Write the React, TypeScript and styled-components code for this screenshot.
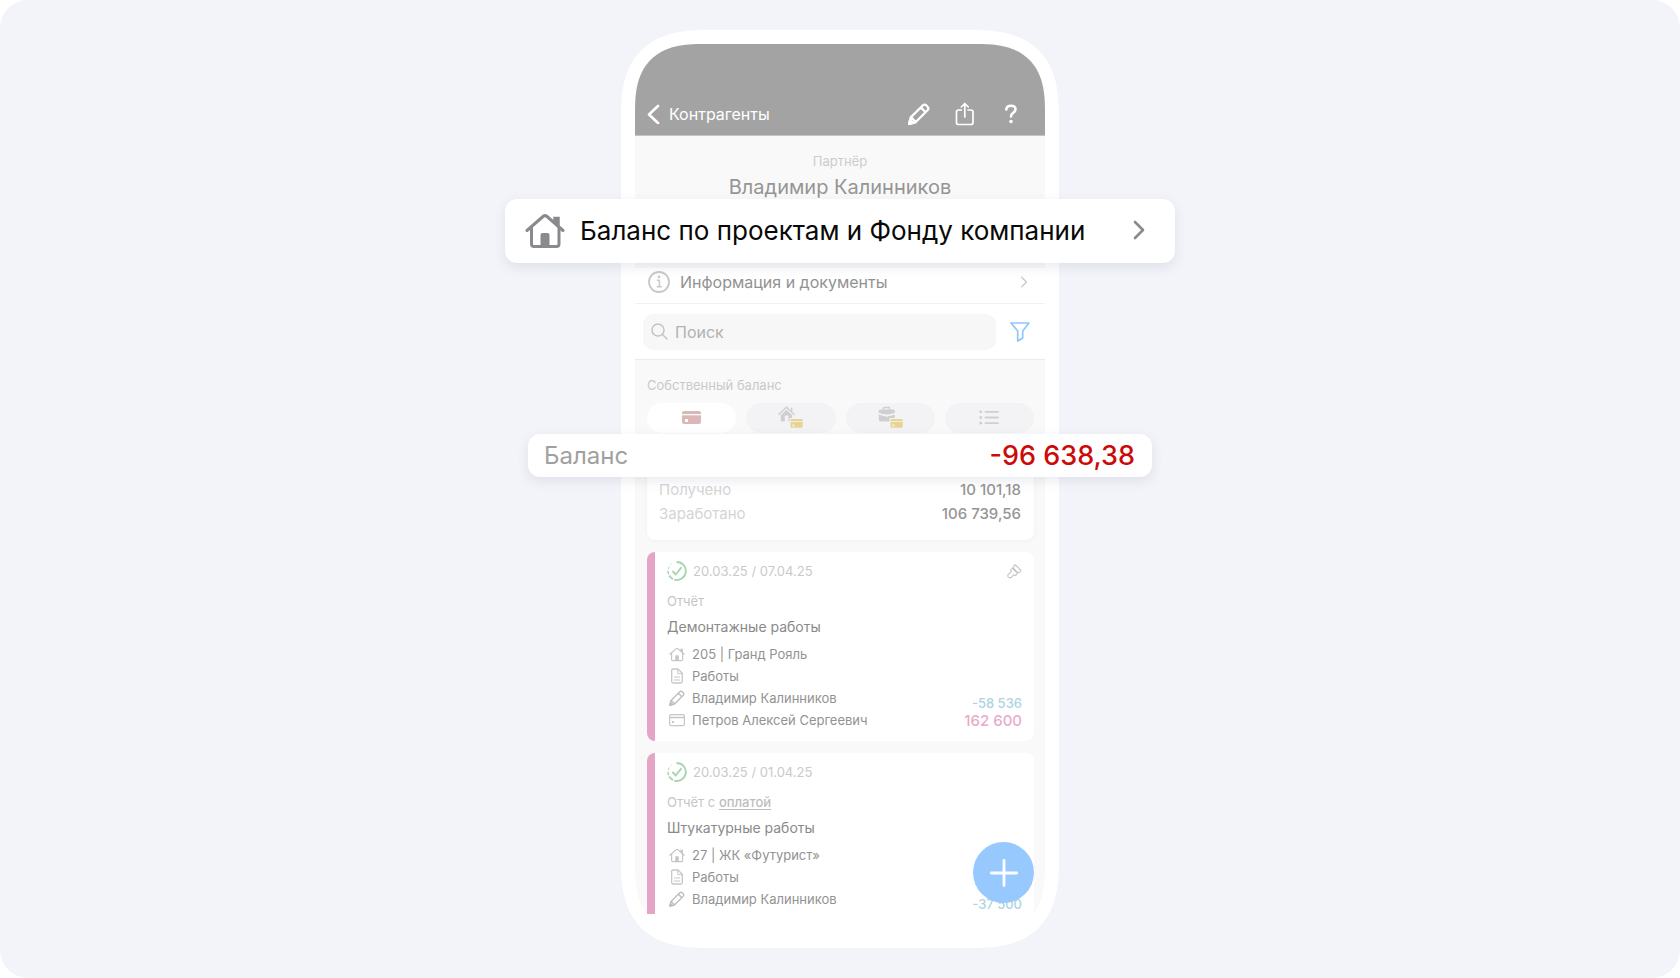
import React from "react";
import styled, { createGlobalStyle, css } from "styled-components";

const Global = createGlobalStyle`
  *, *::before, *::after { box-sizing: border-box; }
  body { margin: 0; background: #fff; font-family: Inter, "Noto Sans", sans-serif; font-size: 13px; color: #929292; }
  button, input { font: inherit; color: inherit; }
  button { border: 0; padding: 0; background: none; cursor: pointer; }
  h1, h2, p, dl, dd, dt, ul { margin: 0; padding: 0; font-weight: 400; }
  svg { display: block; flex: none; }
`;

const Stage = styled.main`
  min-height: 100vh;
  padding: 30px 24px;
  border-radius: 28px;
  background: #f3f4f9;
`;

const Phone = styled.div`
  position: relative;
  width: 438px;
  max-width: 100%;
  margin: 0 auto;
  padding: 14px;
  background: #fff;
  border-radius: 72px;
  @supports (corner-shape: superellipse(1.4)) {
    border-radius: 88px;
    corner-shape: superellipse(1.4);
  }
`;

const Screen = styled.div`
  position: relative;
  overflow: hidden;
  padding-bottom: 20px;
  border-radius: 54px;
  @supports (corner-shape: superellipse(1.4)) {
    border-radius: 68px;
    corner-shape: superellipse(1.4);
  }
`;

const NavBar = styled.header`
  display: flex;
  align-items: flex-end;
  height: 92px;
  padding: 0 20px 7px 12px;
  background: #a3a3a3;
  border-bottom: 1px solid #c4c4c4;
  color: #fff;
`;

const BackButton = styled.button`
  display: flex;
  align-items: center;
  gap: 8px;
  height: 28px;
  margin-right: auto;
  font-size: 16px;
`;

const NavActions = styled.div`
  display: flex;
  gap: 18px;
`;

const IconButton = styled.button`
  display: grid;
  place-items: center;
  width: 28px;
  height: 28px;
`;

const Profile = styled.section`
  height: 132px;
  padding-top: 15px;
  background: #f9f9f9;
  text-align: center;
`;

const Role = styled.p`
  line-height: 20px;
  color: #ccc;
`;

const Name = styled.h1`
  font-size: 20px;
  line-height: 32px;
  color: #959595;
`;

const InfoLink = styled.a`
  display: flex;
  align-items: center;
  gap: 10px;
  height: 36px;
  padding: 0 17px 8px 13px;
  border-bottom: 1px solid #f1f1f1;
  font-size: 16px;
  color: #929292;
  text-decoration: none;
`;

const Grow = styled.span`
  flex: 1;
`;

const SearchBar = styled.form`
  display: flex;
  align-items: center;
  gap: 10px;
  height: 56px;
  padding: 0 11px 0 8px;
  border-bottom: 1px solid #ebebeb;
`;

const SearchField = styled.label`
  display: flex;
  flex: 1;
  align-items: center;
  gap: 7px;
  height: 36px;
  padding: 0 8px;
  border-radius: 10px;
  background: #f7f7f7;
  input {
    flex: 1;
    min-width: 0;
    border: 0;
    padding: 0;
    outline: 0;
    background: none;
    font-size: 16px;
  }
  input::placeholder { color: #b2b2b2; opacity: 1; }
`;

const Feed = styled.section`
  height: 554px;
  overflow: hidden;
  padding: 15px 11px 0 12px;
  background: #f9f9f9;
`;

const FeedTitle = styled.h2`
  font-size: 13px;
  line-height: 20px;
  color: #c9c9c9;
`;

const Tabs = styled.div`
  display: flex;
  gap: 10px;
  margin-top: 8px;
`;

const Tab = styled.button<{ $active?: boolean }>`
  display: grid;
  flex: 1;
  place-items: center;
  height: 30px;
  padding-bottom: 2px;
  border-radius: 15px;
  background: ${(p) => (p.$active ? "#fff" : "#f3f3f5")};
`;

const Summary = styled.dl`
  margin-top: 10px;
  height: 97px;
  padding: 35px 13px 0 12px;
  border-radius: 8px;
  background: #fff;
  box-shadow: 0 1px 4px rgba(0, 0, 0, 0.04);
  font-size: 15px;
  line-height: 24px;
`;

const SummaryRow = styled.div`
  display: flex;
  justify-content: space-between;
  dt { color: #d5d5d5; }
  dd { font-weight: 500; color: #959595; }
`;

const Card = styled.article`
  display: flex;
  justify-content: space-between;
  height: 189px;
  margin-top: 12px;
  padding: 8px 12px;
  border-left: 8px solid #e5a5c6;
  border-radius: 8px;
  background: #fff;
`;

const CardSide = styled.div`
  display: flex;
  flex-direction: column;
  align-items: flex-end;
  justify-content: space-between;
  padding: 3px 0 4px;
`;

const Dates = styled.div`
  display: flex;
  align-items: center;
  gap: 6px;
  height: 22px;
  color: #cacaca;
`;

const Kind = styled.p`
  margin-top: 9px;
  line-height: 20px;
  color: #c6c6c6;
  a { color: #bdbdbd; font-weight: 500; text-underline-offset: 2px; }
`;

const Title = styled.h2`
  margin: 4px 0;
  font-size: 14px;
  line-height: 24px;
  color: #8a8a8a;
`;

const Meta = styled.ul`
  list-style: none;
`;

const MetaRow = styled.li`
  display: flex;
  align-items: center;
  gap: 7px;
  height: 22px;
  padding-left: 2px;
`;

const Amounts = styled.div`
  text-align: right;
  font-weight: 500;
`;

const Cost = styled.p`
  font-weight: 500;
  line-height: 17px;
  color: #acd5df;
`;

const Total = styled.p`
  font-size: 15px;
  font-weight: 500;
  line-height: 17px;
  color: #e9abca;
`;

const AddButton = styled.button`
  position: absolute;
  right: 11px;
  bottom: 31px;
  display: grid;
  place-items: center;
  width: 61px;
  height: 61px;
  border-radius: 50%;
  background: #97c9ff;
`;

const callout = css`
  position: absolute;
  left: 50%;
  display: flex;
  align-items: center;
  transform: translateX(-50%);
  max-width: 96vw;
  border-radius: 12px;
  background: #fff;
  box-shadow: 0 4px 12px rgba(70, 85, 130, 0.12);
`;

const ProjectLink = styled.a`
  ${callout}
  top: 169px;
  width: 670px;
  height: 64px;
  gap: 15px;
  padding: 0 30px 2px 20px;
  font-size: 26px;
  color: #080808;
  text-decoration: none;
  white-space: nowrap;
`;

const Balance = styled.div`
  ${callout}
  top: 404px;
  width: 624px;
  height: 43px;
  justify-content: space-between;
  padding: 0 17px 0 16px;
  font-size: 24px;
  color: #a0a0a0;
`;

const BalanceValue = styled.strong`
  font-size: 27px;
  font-weight: 500;
  color: #cc0a0a;
`;

type IconProps = { size?: number; color?: string };

const line = (color: string, width: number) => ({
  fill: "none",
  stroke: color,
  strokeWidth: width,
  strokeLinecap: "round" as const,
  strokeLinejoin: "round" as const,
});

const House = ({ size = 16, color = "#c6c6c6" }: IconProps) => (
  <svg width={size} height={size} viewBox="0 0 40 40" {...line(color, 3)} aria-hidden>
    <path d="M2 20.500 18 6.500Q20 4.800 22 6.500L38 20.500" />
    <path d="M6.500 18V34Q6.500 36.500 9 36.500H31.500Q34 36.500 34 34V18" />
    <path d="M15.500 36V25Q15.500 23 17.500 23H22.500Q24.500 23 24.500 25V36Z" fill={color} stroke="none" />
    <path d="M30 12V8.500H33V15" strokeWidth={3.500} strokeLinejoin="miter" />
  </svg>
);

const Doc = () => (
  <svg width={16} height={16} viewBox="0 0 16 16" {...line("#c6c6c6", 1.3)} aria-hidden>
    <path d="M3.700 1H9L13.300 5.300V13.500Q13.300 15 11.800 15H4.200Q2.700 15 2.700 13.500V2Q2.700 1 3.700 1Z" />
    <path d="M8.800 1.300V5.600H13M5.300 9H10.700M5.300 12H10.700" strokeWidth={1} />
  </svg>
);

const Pencil = ({ size = 16, color = "#bdbdbd", weight = 1.3 }: IconProps & { weight?: number }) => (
  <svg width={size} height={size} viewBox="0 0 16 16" {...line(color, weight)} aria-hidden>
    <path d="M.8 15.200 2 10.500 10.700 1.800Q12 .6 13.300 1.800L14.200 2.700Q15.400 4 14.200 5.300L5.500 14ZM9.300 3.200 12.800 6.700M2.200 10.400 5.600 13.800" />
    <path d="M.8 15.200 1.500 12.500 3.500 14.500Z" fill={color} />
  </svg>
);

const CardOutline = () => (
  <svg width={16} height={16} viewBox="0 0 16 16" {...line("#c6c6c6", 1.2)} aria-hidden>
    <rect x=".6" y="2.600" width="14.800" height="11" rx="1.400" />
    <path d="M.6 5.500H15.400" strokeWidth={1.5} />
    <rect x="3" y="9" width="2" height="2" fill="#c6c6c6" stroke="none" />
  </svg>
);

const Brush = () => (
  <svg width={15} height={16} viewBox="0 0 16 16" {...line("#c2c2c2", 1.1)} aria-hidden>
    <path d="M8.600 1.200 14.900 7.400 13.200 9.400 11.600 9.900 6.300 4.500ZM5.700 5.100 11 10.400 9.600 12.500Q8.600 13 7.400 11.800L4.200 15Q2.800 15.800 1.400 14.600.2 13 1.400 11.600L4.600 8.700Q3.600 7.400 4.400 6.400Z" />
  </svg>
);

const Progress = () => (
  <svg width={20} height={20} viewBox="0 0 20 20" {...line("#a9d5b1", 1.9)} strokeLinecap="butt" aria-hidden>
    <path d="M9.500 1A9 9 0 1 1 7.200 18.600" />
    <path d="M6 18.100A9 9 0 0 1 2.200 14.600" />
    <path d="M1.600 13.200A9 9 0 0 1 1 9.800" strokeWidth={1.5} />
    <path d="M1.300 8A9 9 0 0 1 2.200 5.600" strokeWidth={1} />
    <path d="M3.200 4.200A9 9 0 0 1 4.600 2.800" strokeWidth={0.6} />
    <path d="M6 10.500 8.700 13.500 14 6.800" strokeLinecap="round" />
  </svg>
);

const Chevron = ({ h, color, weight }: { h: number; color: string; weight: number }) => (
  <svg width={h / 2 + 2} height={h} viewBox="0 0 12 20" {...line(color, weight)} aria-hidden>
    <path d="M2 2 10 10 2 18" />
  </svg>
);

const CardShape = ({ color, cut }: { color: string; cut: string }) => (
  <>
    <rect width="19" height="13" rx="2" fill={color} />
    <path d="M0 3.700H19" stroke={cut} strokeWidth="1.200" />
    <rect x="3" y="8" width="3" height="3" rx=".5" fill={cut} />
  </>
);

type Report = {
  dates: string;
  kind: React.ReactNode;
  title: string;
  project: string;
  payer?: string;
  cost: string;
  total?: string;
  brush?: boolean;
};

const reports: Report[] = [
  {
    dates: "20.03.25 / 07.04.25",
    kind: "Отчёт",
    title: "Демонтажные работы",
    project: "205 | Гранд Рояль",
    payer: "Петров Алексей Сергеевич",
    cost: "-58 536",
    total: "162 600",
    brush: true,
  },
  {
    dates: "20.03.25 / 01.04.25",
    kind: <>Отчёт с <a href="#payment">оплатой</a></>,
    title: "Штукатурные работы",
    project: "27 | ЖК «Футурист»",
    cost: "-37 500",
  },
];

const ReportCard = ({ r }: { r: Report }) => (
  <Card>
    <div>
      <Dates><Progress />{r.dates}</Dates>
      <Kind>{r.kind}</Kind>
      <Title>{r.title}</Title>
      <Meta>
        <MetaRow><House />{r.project}</MetaRow>
        <MetaRow><Doc />Работы</MetaRow>
        <MetaRow><Pencil />Владимир Калинников</MetaRow>
        {r.payer && <MetaRow><CardOutline />{r.payer}</MetaRow>}
      </Meta>
    </div>
    <CardSide>
      {r.brush ? <Brush /> : <span />}
      <Amounts>
        <Cost>{r.cost}</Cost>
        <Total>{r.total ?? "\u00a0"}</Total>
      </Amounts>
    </CardSide>
  </Card>
);

export default function App() {
  return (
    <>
      <Global />
      <Stage>
        <Phone>
          <Screen>
            <NavBar>
              <BackButton>
                <svg width="14" height="20" viewBox="0 0 14 20" {...line("#fff", 2.6)} aria-hidden>
                  <path d="M11 2 2 10.500 11 19" />
                </svg>
                Контрагенты
              </BackButton>
              <NavActions>
                <IconButton aria-label="Редактировать"><Pencil size={22} color="#fff" weight={1.7} /></IconButton>
                <IconButton aria-label="Поделиться">
                  <svg width="20" height="24" viewBox="0 0 20 24" {...line("#fff", 1.7)}>
                    <path d="M6.500 8H3.500Q1.500 8 1.500 10V20.500Q1.500 22.500 3.500 22.500H16Q18 22.500 18 20.500V10Q18 8 16 8H13M9.800 15V1.500M6.300 5 9.800 1.500 13.300 5" />
                  </svg>
                </IconButton>
                <IconButton aria-label="Помощь">
                  <svg width="14" height="20" viewBox="0 0 14 20" {...line("#fff", 2.6)}>
                    <path d="M2.300 5.500Q2.500 1.700 7 1.700 11.500 1.700 11.500 5.300 11.500 7.300 9.300 8.800 7 10.300 7 12.500" />
                    <circle cx="7" cy="17.500" r="1.800" fill="#fff" stroke="none" />
                  </svg>
                </IconButton>
              </NavActions>
            </NavBar>
            <Profile>
              <Role>Партнёр</Role>
              <Name>Владимир Калинников</Name>
            </Profile>
            <InfoLink href="#info">
              <svg width="22" height="22" viewBox="0 0 22 22" {...line("#c8c8c8", 1.8)} aria-hidden>
                <circle cx="11" cy="11" r="10" />
                <path d="M9 9.300H11.400V15.500M8.700 15.700H13.700" strokeWidth={1.5} strokeLinecap="butt" />
                <circle cx="11" cy="5.800" r="1.400" fill="#c8c8c8" stroke="none" />
              </svg>
              <Grow>Информация и документы</Grow>
              <Chevron h={12} color="#c4c4c4" weight={2} />
            </InfoLink>
            <SearchBar>
              <SearchField>
                <svg width="17" height="17" viewBox="0 0 17 17" {...line("#c4c4c4", 1.5)} aria-hidden>
                  <circle cx="7" cy="7" r="6" />
                  <path d="M11.500 11.500 16 16" />
                </svg>
                <input type="text" placeholder="Поиск" aria-label="Поиск" />
              </SearchField>
              <IconButton type="button" aria-label="Фильтр">
                <svg width="20" height="20" viewBox="0 0 20 20" {...line("#90c6ff", 1.7)}>
                  <path d="M1 1H19L12.700 9V16L7.700 19V9Z" />
                </svg>
              </IconButton>
            </SearchBar>
            <Feed>
              <FeedTitle>Собственный баланс</FeedTitle>
              <Tabs>
                <Tab $active aria-label="Карта">
                  <svg width="19" height="13" viewBox="0 0 19 13"><CardShape color="#dab8b8" cut="#fff" /></svg>
                </Tab>
                <Tab aria-label="Проекты">
                  <svg width="25" height="22" viewBox="0 0 25 22">
                    <path d="M.8 8.500 8.500 1.200 16.200 8.500M13.700 2.200V5.500" {...line("#cfcfd1", 1.4)} />
                    <path d="M2.800 9.200 8.500 3.800 14.200 9.200V14.500Q14.200 15.500 13.200 15.500H10.400V9.500H6.800V15.500H3.800Q2.800 15.500 2.800 14.500Z" fill="#cfcfd1" />
                    <rect x="11.500" y="12" width="13.500" height="10" fill="#f3f3f5" />
                    <g transform="translate(12.500 13) scale(.64 .68)"><CardShape color="#e7d394" cut="#f3f3f5" /></g>
                  </svg>
                </Tab>
                <Tab aria-label="Компания">
                  <svg width="25" height="22" viewBox="0 0 25 22">
                    <path d="M5.500 4V2.300Q5.500 1.500 6.300 1.500H10.700Q11.500 1.500 11.500 2.300V4" {...line("#cfcfd1", 1.3)} />
                    <path d="M.5 5.500Q.5 3.500 2.500 3.500H15Q17 3.500 17 5.500V6.500Q13 8.500 8.700 8.500 4.500 8.500 .5 6.500ZM.8 8.600Q4 10 7 10.200 8.700 11.500 10.500 10.200 14 10 16.700 8.600V13.500Q16.700 15.500 14.700 15.500H2.800Q.8 15.500.8 13.500Z" fill="#cfcfd1" />
                    <rect x="11.500" y="12" width="13.500" height="10" fill="#f3f3f5" />
                    <g transform="translate(12.500 13) scale(.64 .68)"><CardShape color="#e7d394" cut="#f3f3f5" /></g>
                  </svg>
                </Tab>
                <Tab aria-label="Список">
                  <svg width="20" height="15" viewBox="0 0 20 15" {...line("#cfcfd1", 1.8)}>
                    <path d="M6.500 1.800H19M6.500 7.500H19M6.500 13.200H19" />
                    <path d="M1.700 1.800H1.800M1.700 7.500H1.800M1.700 13.200H1.800" strokeWidth={2.8} />
                  </svg>
                </Tab>
              </Tabs>
              <Summary>
                <SummaryRow><dt>Получено</dt><dd>10 101,18</dd></SummaryRow>
                <SummaryRow><dt>Заработано</dt><dd>106 739,56</dd></SummaryRow>
              </Summary>
              {reports.map((r) => <ReportCard key={r.title} r={r} />)}
            </Feed>
            <AddButton aria-label="Добавить">
              <svg width="28" height="28" viewBox="0 0 28 28" {...line("#fff", 2.8)}>
                <path d="M14 1.400V26.600M1.400 14H26.600" />
              </svg>
            </AddButton>
          </Screen>
          <ProjectLink href="#projects">
            <House size={40} color="#8a8a8e" />
            <Grow>Баланс по проектам и Фонду компании</Grow>
            <Chevron h={20} color="#8a8a8e" weight={2.6} />
          </ProjectLink>
          <Balance>
            <span>Баланс</span>
            <BalanceValue>-96 638,38</BalanceValue>
          </Balance>
        </Phone>
      </Stage>
    </>
  );
}
